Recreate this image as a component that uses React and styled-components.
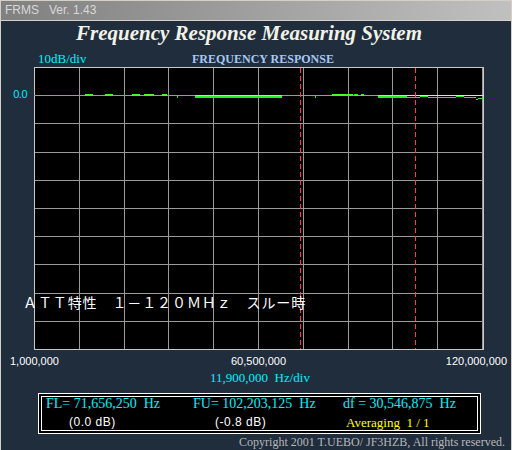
import React from "react";
import styled, { createGlobalStyle } from "styled-components";

const GlobalStyle = createGlobalStyle`
  html, body {
    margin: 0;
    padding: 0;
    background: #1f2d3d;
  }
`;

const Window = styled.div`
  width: 512px;
  height: 450px;
  box-sizing: border-box;
  background: #1f2d3d;
  border-left: 1px solid #d4d0c8;
  border-right: 1px solid #d4d0c8;
  overflow: hidden;
  font-family: "Liberation Serif", "Times New Roman", serif;
`;

const TitleBar = styled.div`
  height: 21px;
  box-sizing: border-box;
  border-top: 1px solid #d4d0c8;
  border-bottom: 1px solid #d4d0c8;
  background: linear-gradient(to right, #808080, #c0c0c0);
  color: #d8d8d8;
  font-family: "Liberation Sans", Arial, sans-serif;
  font-size: 12px;
  line-height: 19px;
  padding-left: 4px;
  white-space: pre;
`;

const Heading = styled.h1`
  margin: 0;
  text-align: center;
  font-size: 21px;
  line-height: 24px;
  font-style: italic;
  font-weight: bold;
  color: #f4f2e6;
  padding-right: 14px;
`;

const HeaderRow = styled.div`
  display: flex;
  align-items: baseline;
  margin-top: 6px;
  height: 15px;
  line-height: 15px;
`;

const DivLabel = styled.span`
  color: #00f0ff;
  font-size: 13px;
  padding-left: 37px;
  width: 154px;
`;

const PlotTitle = styled.span`
  color: #a8c8f4;
  font-size: 12px;
  font-weight: bold;
`;

const PlotRow = styled.div`
  position: relative;
  display: flex;
  margin-top: 1px;
`;

const YAxis = styled.div`
  width: 33px;
  padding-top: 21px;
  box-sizing: border-box;
  color: #00f0ff;
  font-family: "Liberation Sans", Arial, sans-serif;
  font-size: 11px;
  letter-spacing: -0.5px;
  text-align: right;
  padding-right: 7px;
`;

const Plot = styled.svg`
  display: block;
  background: #000;
`;

const Memo = styled.div`
  position: absolute;
  left: 22px;
  top: 226px;
  color: #fff;
  font-family: "Noto Sans CJK JP", sans-serif;
  font-size: 14px;
  line-height: 18px;
  letter-spacing: 0.9px;
  white-space: pre;
`;

const XAxis = styled.div`
  display: grid;
  grid-template-columns: 1fr auto 1fr;
  margin-top: 5px;
  padding: 0 4px 0 9px;
  color: #fff;
  font-family: "Liberation Sans", Arial, sans-serif;
  font-size: 11px;
  line-height: 13px;
`;

const XLabel = styled.span`
  justify-self: ${(p) => p.$align || "center"};
`;

const Scale = styled.div`
  margin-top: 2px;
  text-align: center;
  color: #00f0ff;
  font-size: 13px;
  line-height: 15px;
  white-space: pre;
  padding-left: 8px;
`;

const InfoBox = styled.div`
  margin: 8px 0 0 37px;
  width: 443px;
  height: 41px;
  box-sizing: border-box;
  background: #000;
  border: 1px solid #fff;
  box-shadow: inset 0 0 0 2px #000, inset 0 0 0 3px #fff;
  display: grid;
  grid-template-columns: 147px 150px 1fr;
  padding: 2px 0 0 7px;
`;

const Reading = styled.span`
  color: #00f0ff;
  font-size: 14px;
  line-height: 16px;
  white-space: pre;
`;

const Sub = styled.span`
  color: ${(p) => (p.$yellow ? "#ffff00" : "#fff")};
  font-family: ${(p) =>
    p.$yellow ? '"Liberation Serif", serif' : '"Liberation Sans", Arial, sans-serif'};
  font-size: ${(p) => (p.$yellow ? "13px" : "12px")};
  line-height: 17px;
  padding-left: ${(p) => p.$indent}px;
  letter-spacing: ${(p) => (p.$yellow ? 0 : 0.5)}px;
  white-space: pre;
`;

const Copyright = styled.div`
  margin-top: 2px;
  text-align: right;
  padding-right: 6px;
  color: #b8b8b8;
  font-size: 12px;
  line-height: 13px;
`;

// plot is 450 x 283, local origin = (34, 67) on the page
const W = 450;
const H = 283;
const ZERO = 28;

const bumps = [
  [85, 93], [105, 113], [132, 140], [144, 154], [162, 167],
  [332, 353], [354, 358], [361, 364],
];
const thick = [[195, 282], [378, 407]];
const ticks = [177, 315];
const steps = [
  [407, 420, 97], [420, 428, 96], [428, 447, 97], [447, 456, 97],
  [456, 464, 96], [464, 476, 97], [476, 478, 99], [478, 483, 98],
];
const markers = [300, 415];

function Chart() {
  const vx = Array.from({ length: 11 }, (_, i) => Math.round(i * 44.8) + 0.5);
  const hy = Array.from({ length: 11 }, (_, i) => Math.round(i * 28.2) + 0.5);
  const lx = (x) => x - 34;
  const ly = (y) => y - 67;

  return (
    <Plot width={W} height={H}>
      {vx.map((x, i) => (
        <line key={"v" + i} x1={x} y1={0} x2={x} y2={H} stroke="#9a9a9a" />
      ))}
      {hy.map((y, i) => (
        <line key={"h" + i} x1={0} y1={y} x2={W} y2={y} stroke="#9a9a9a" />
      ))}
      <rect x={0.5} y={0.5} width={W - 1} height={H - 1} fill="none" stroke="#c8c8c8" />

      <rect x={0} y={ZERO} width={lx(407)} height={1} fill="#22ee22" />
      <rect x={lx(407)} y={ZERO} width={W - lx(407)} height={1} fill="#ffff00" />
      {bumps.map(([a, b], i) => (
        <rect key={"b" + i} x={lx(a)} y={ZERO - 1} width={b - a} height={2} fill="#44ff22" />
      ))}
      {thick.map(([a, b], i) => (
        <g key={"t" + i}>
          <rect x={lx(a)} y={ZERO} width={b - a} height={1} fill="#ccff00" />
          <rect x={lx(a)} y={ZERO + 1} width={b - a} height={2} fill="#22ee22" />
        </g>
      ))}
      {ticks.map((x, i) => (
        <rect key={"k" + i} x={lx(x)} y={ZERO + 1} width={1} height={2} fill="#22ee22" />
      ))}
      {steps.map(([a, b, y], i) => (
        <rect key={"s" + i} x={lx(a)} y={ly(y)} width={b - a} height={1} fill="#22ee22" />
      ))}

      {markers.map((x, i) => (
        <line
          key={"m" + i}
          x1={lx(x) + 0.5}
          y1={1}
          x2={lx(x) + 0.5}
          y2={H - 1}
          stroke="#ff4040"
          strokeDasharray="5 3"
        />
      ))}
    </Plot>
  );
}

export default function App() {
  return (
    <>
      <GlobalStyle />
      <Window>
        <TitleBar>{"FRMS   Ver. 1.43"}</TitleBar>
        <Heading>Frequency Response Measuring System</Heading>
        <HeaderRow>
          <DivLabel>10dB/div</DivLabel>
          <PlotTitle>FREQUENCY RESPONSE</PlotTitle>
        </HeaderRow>
        <PlotRow>
          <YAxis>0.0</YAxis>
          <Chart />
          <Memo>{"ＡＴＴ特性　１－１２０ＭＨｚ　スルー時"}</Memo>
        </PlotRow>
        <XAxis>
          <XLabel $align="start">1,000,000</XLabel>
          <XLabel>60,500,000</XLabel>
          <XLabel $align="end">120,000,000</XLabel>
        </XAxis>
        <Scale>{"11,900,000  Hz/div"}</Scale>
        <InfoBox>
          <Reading>{"FL= 71,656,250  Hz"}</Reading>
          <Reading>{"FU= 102,203,125  Hz"}</Reading>
          <Reading>{"df = 30,546,875  Hz"}</Reading>
          <Sub $indent={23}>{"(0.0 dB)"}</Sub>
          <Sub $indent={22}>{"(-0.8 dB)"}</Sub>
          <Sub $indent={3} $yellow>{"Averaging  1 / 1"}</Sub>
        </InfoBox>
        <Copyright>Copyright 2001 T.UEBO/ JF3HZB, All rights reserved.</Copyright>
      </Window>
    </>
  );
}
